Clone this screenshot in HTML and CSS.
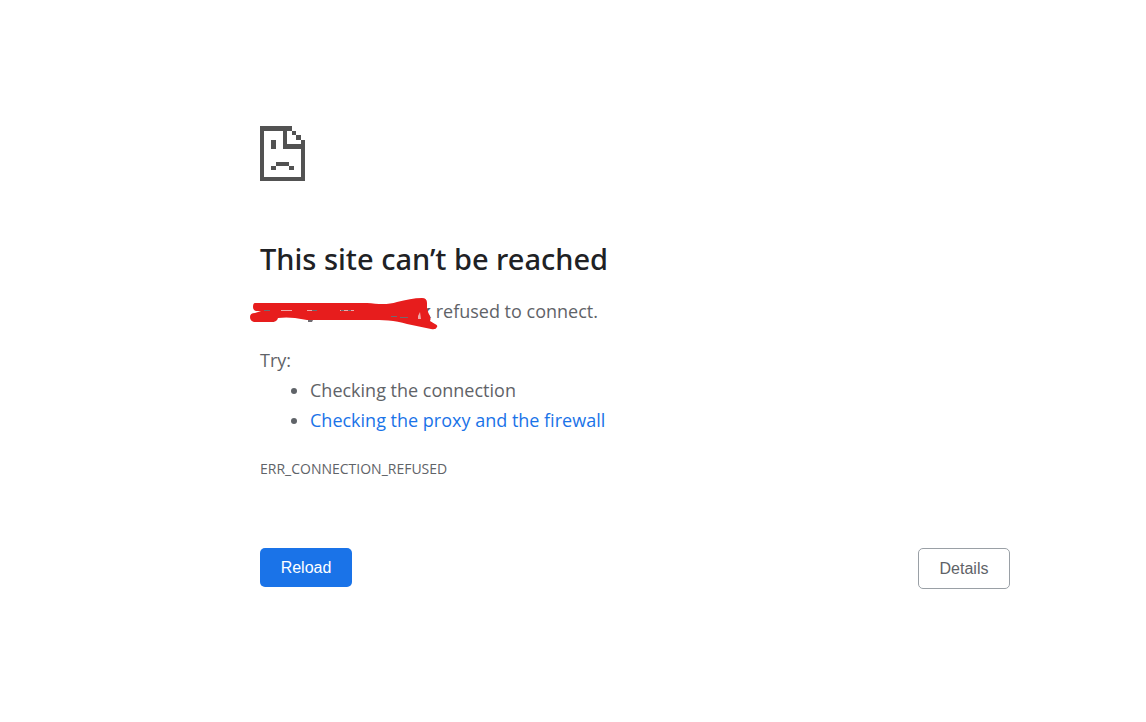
FILE: index.html
```
<!DOCTYPE html>
<html lang="en">

<head>
    <meta charset="UTF-8">
    <meta name="viewport" content="width=device-width, initial-scale=1.0">
    <title>This site can’t be reached</title>
    <link rel="stylesheet" href="styles.css">
</head>

<body>
    <main class="error-page">
        <svg class="icon" width="45" height="55" viewBox="0 0 45 55" shape-rendering="crispEdges" aria-hidden="true">
            <path d="M0 0H32V5H27V18H45V55H0ZM4 5V51H41V23H23V5Z" fill-rule="evenodd"/>
            <path d="M32 5h4v4h-4zM36 9h5v5h-5zM41 14h4v5h-4z"/>
            <path d="M11 14h5v9h-5zM16 36h13v4H16zM11 40h5v4h-5zM29 40h5v4h-5z"/>
        </svg>
        <h1>This site can’t be reached</h1>
        <p class="summary">
            <span class="host">
                <b>k</b>
                <svg class="scribble" width="190" height="36" viewBox="0 0 190 36" aria-hidden="true">
                    <path class="under" d="M20 25h4v1h-4zM58 24h5l-1 2h-4z"/>
                    <path class="ink" d="M5 7H117C128 8 138 9 147 6C156 4 164 2 172 2Q177 2 177 7V12Q178 17 180 20Q181 23 180 25L185 28Q188 29 187 31Q186 34 181 33L157 28C145 24 132 24 120 24H57L45 22Q36 21 28 22Q27 26 22 26H4Q0 25 0 21Q0 17 5 17L11 15H6Q3 14 3 11Q3 7 5 7Z"/>
                    <path class="gap" d="M31 14h11v1h-11zM57 14h10v1h-10zM90 14h14v1h-14zM168 20l2-4 1 7h-3z"/>
                    <path class="under" d="M14 14h6v1h-6zM62 14h5v1h-5zM91 14h3v1h-3zM98 14h3v1h-3zM141 20h6v1h-6zM150 21h8v1h-8z"/>
                </svg>
            </span>
            refused to connect.
        </p>
        <div class="suggestions">
            <p>Try:</p>
            <ul>
                <li>Checking the connection</li>
                <li><a href="#">Checking the proxy and the firewall</a></li>
            </ul>
        </div>
        <div class="error-code">ERR_CONNECTION_REFUSED</div>
        <div class="buttons">
            <button type="button" class="btn btn-primary">Reload</button>
            <button type="button" class="btn btn-secondary">Details</button>
        </div>
    </main>
</body>

</html>
```

FILE: styles.css
```
body {
    margin: 0;
    padding: 126px 0 0 124px;
    background-color: #fff;
    color: #5f6368;
    font-family: "Segoe UI", "Open Sans", sans-serif;
    font-size: 18px;
    line-height: 30px;
}

.error-page {
    max-width: 750px;
    margin: 0 auto;
}

.icon {
    display: block;
    fill: #525252;
}

h1 {
    margin: 58px 0 17px;
    color: #202124;
    font-family: "Segoe UI", "Noto Sans", sans-serif;
    font-size: 29px;
    font-weight: 500;
    line-height: 40px;
}

p,
ul {
    margin: 0;
}

.summary {
    margin-bottom: 19px;
}

.host {
    display: inline-block;
    position: relative;
    width: 171px;
    text-align: right;
}

/* marker strokes over the host name */
.scribble {
    position: absolute;
    left: -10px;
    top: 0;
}

.ink {
    fill: #e71d1d;
}

.gap {
    fill: #f0a8a8;
}

.under {
    fill: #6f6a70;
}

ul {
    padding-left: 50px;
}

a {
    color: #1a73e8;
    text-decoration: none;
}

.error-code {
    margin-top: 19px;
    font-size: 14px;
}

.buttons {
    display: flex;
    justify-content: space-between;
    align-items: flex-start;
    margin-top: 64px;
}

.btn {
    min-width: 92px;
    padding: 0 20px;
    border: 0;
    border-radius: 5px;
    font-family: Arial, "Liberation Sans", sans-serif;
    font-size: 16px;
    line-height: 39px;
    cursor: pointer;
}

.btn-primary {
    background-color: #1a73e8;
    color: #fff;
}

.btn-secondary {
    border: 1px solid #9aa0a6;
    background-color: #fff;
    color: #5f6368;
}
```
